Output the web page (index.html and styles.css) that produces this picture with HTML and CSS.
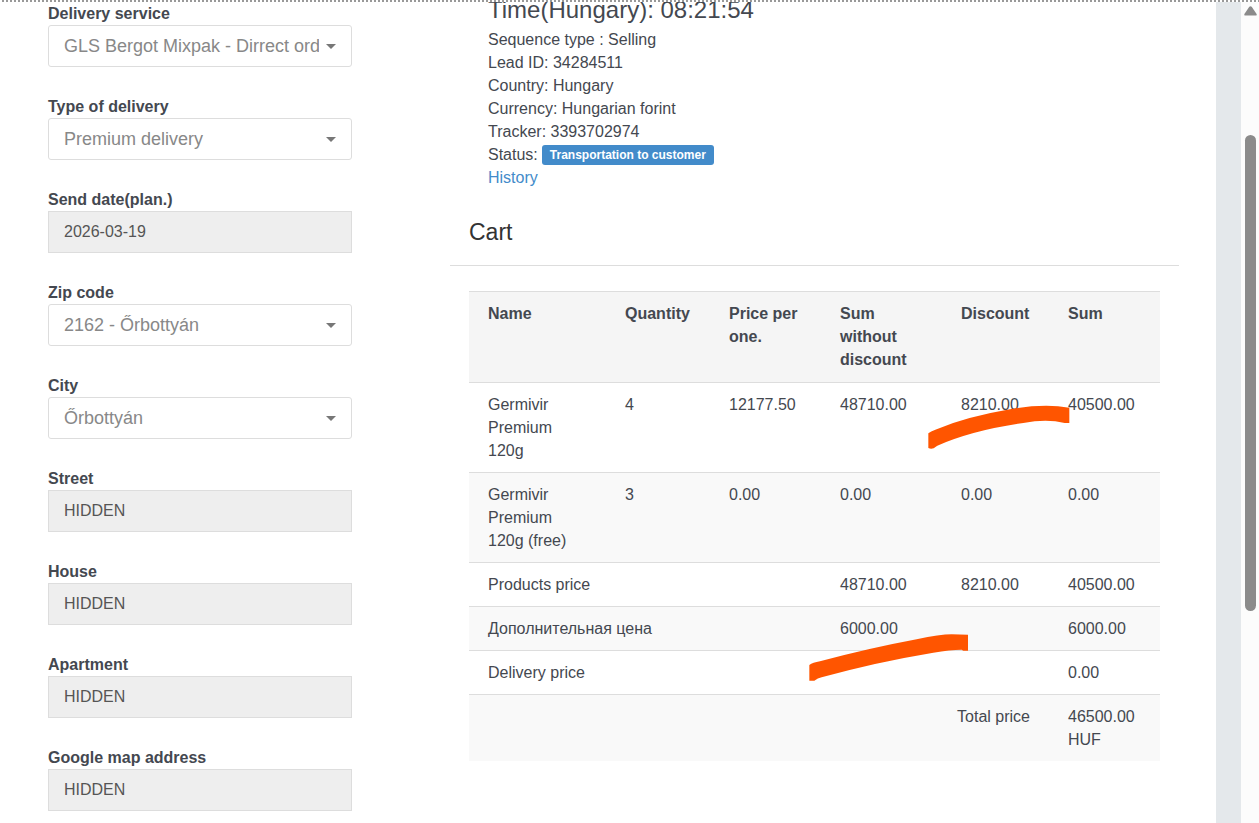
FILE: index.html
```html
<!DOCTYPE html>
<html lang="en">
<head>
    <meta charset="UTF-8">
    <meta name="viewport" content="width=device-width, initial-scale=1.0">
    <title>Order 34284511</title>
    <link rel="stylesheet" href="styles.css">
</head>
<body>
    <div class="page">
        <form class="delivery-form">
            <div class="form-group">
                <label for="service">Delivery service</label>
                <div class="select-wrap">
                    <select id="service"><option>GLS Bergot Mixpak - Dirrect order</option></select>
                    <svg class="caret" viewBox="0 0 10 5"><path d="M0 0h10L5 5z"/></svg>
                </div>
            </div>
            <div class="form-group">
                <label for="type">Type of delivery</label>
                <div class="select-wrap">
                    <select id="type"><option>Premium delivery</option></select>
                    <svg class="caret" viewBox="0 0 10 5"><path d="M0 0h10L5 5z"/></svg>
                </div>
            </div>
            <div class="form-group">
                <label for="send-date">Send date(plan.)</label>
                <input type="text" id="send-date" value="2026-03-19" readonly>
            </div>
            <div class="form-group">
                <label for="zip">Zip code</label>
                <div class="select-wrap">
                    <select id="zip"><option>2162 - Őrbottyán</option></select>
                    <svg class="caret" viewBox="0 0 10 5"><path d="M0 0h10L5 5z"/></svg>
                </div>
            </div>
            <div class="form-group">
                <label for="city">City</label>
                <div class="select-wrap">
                    <select id="city"><option>Őrbottyán</option></select>
                    <svg class="caret" viewBox="0 0 10 5"><path d="M0 0h10L5 5z"/></svg>
                </div>
            </div>
            <div class="form-group">
                <label for="street">Street</label>
                <input type="text" id="street" value="HIDDEN" readonly>
            </div>
            <div class="form-group">
                <label for="house">House</label>
                <input type="text" id="house" value="HIDDEN" readonly>
            </div>
            <div class="form-group">
                <label for="apartment">Apartment</label>
                <input type="text" id="apartment" value="HIDDEN" readonly>
            </div>
            <div class="form-group">
                <label for="map-address">Google map address</label>
                <input type="text" id="map-address" value="HIDDEN" readonly>
            </div>
        </form>

        <main class="order">
            <section class="order-info">
                <h2>Time(Hungary): 08:21:54</h2>
                <p>Sequence type : Selling</p>
                <p>Lead ID: 34284511</p>
                <p>Country: Hungary</p>
                <p>Currency: Hungarian forint</p>
                <p>Tracker: 3393702974</p>
                <p class="status">Status: <span class="badge">Transportation to customer</span></p>
                <p><a href="#history">History</a></p>
            </section>

            <h3 class="cart-title">Cart</h3>
            <div class="cart">
                <table class="cart-table">
                    <colgroup>
                        <col>
                        <col class="col-quantity">
                        <col class="col-price">
                        <col class="col-full">
                        <col class="col-discount">
                        <col class="col-sum">
                    </colgroup>
                    <thead>
                        <tr>
                            <th>Name</th>
                            <th>Quantity</th>
                            <th>Price per one.</th>
                            <th>Sum without discount</th>
                            <th>Discount</th>
                            <th>Sum</th>
                        </tr>
                    </thead>
                    <tbody>
                        <tr>
                            <td>Germivir Premium 120g</td>
                            <td>4</td>
                            <td>12177.50</td>
                            <td>48710.00</td>
                            <td class="marked">8210.00
                                <svg class="mark mark-discount" viewBox="84 72 426 138"><path d="M85 160Q92 154 106 149Q200 110 330 88Q430 70 508 83V129H494Q440 116 370 129Q220 150 112 197L101 205Q92 208 85 204z"/></svg>
                            </td>
                            <td>40500.00</td>
                        </tr>
                        <tr>
                            <td>Germivir Premium 120g (free)</td>
                            <td>3</td>
                            <td>0.00</td>
                            <td>0.00</td>
                            <td>0.00</td>
                            <td>0.00</td>
                        </tr>
                        <tr>
                            <td colspan="3">Products price</td>
                            <td>48710.00</td>
                            <td>8210.00</td>
                            <td>40500.00</td>
                        </tr>
                        <tr>
                            <td colspan="3">Дополнительная цена</td>
                            <td class="marked">6000.00
                                <svg class="mark mark-extra" viewBox="87 99 480 147"><path d="M88 195Q98 188 120 184Q270 144 410 118Q480 103 515 103L564 104V152H550L545 149Q510 149 460 158Q280 188 125 232Q113 235 103 242H88z"/></svg>
                            </td>
                            <td></td>
                            <td>6000.00</td>
                        </tr>
                        <tr>
                            <td colspan="5">Delivery price</td>
                            <td>0.00</td>
                        </tr>
                        <tr>
                            <td colspan="5" class="total">Total price</td>
                            <td>46500.00 HUF</td>
                        </tr>
                    </tbody>
                </table>
            </div>
        </main>
    </div>
    <div class="gutter"></div>
    <div class="scrollbar">
        <svg class="scroll-up" viewBox="0 0 13 10"><path d="M5.3 .8Q6.5-.4 7.7.8L12.6 8Q13 9.6 11.6 9.6H1.4Q0 9.6.4 8z"/></svg>
        <div class="scroll-thumb"></div>
    </div>
</body>
</html>
```
FILE: styles.css
```css
* {
    box-sizing: border-box;
}
body {
    display: flex;
    min-height: 100vh;
    margin: 0;
    font-family: "Liberation Sans", Arial, sans-serif;
    font-size: 16px;
    line-height: 23px;
    color: #444850;
    background: #fff;
}
/* dotted line over the top edge */
body::before {
    content: "";
    position: absolute;
    top: 0;
    left: 0;
    right: 0;
    height: 2px;
    background: repeating-linear-gradient(90deg, #fff 0 2px, #999 2px 4px);
}
h2, h3, p {
    margin: 0;
    font-weight: normal;
}
a {
    color: #428bca;
    text-decoration: none;
}
.page {
    flex: 1;
    display: grid;
    grid-template-columns: 304px 1fr;
    gap: 98px;
    padding: 2px 37px 10px 48px;
}
.delivery-form {
    display: flex;
    flex-direction: column;
    gap: 28px;
}
.form-group label {
    display: block;
    font-weight: bold;
}
.form-group input,
.form-group select {
    display: block;
    width: 100%;
    height: 42px;
    margin: 0;
    padding: 0 15px;
    border: 1px solid #ddd;
    font-family: inherit;
}
.form-group input {
    font-size: 16px;
    color: #555;
    background: #eee;
}
.form-group select {
    appearance: none;
    padding-right: 32px;
    border-radius: 3px;
    font-size: 18px;
    color: #888;
    background: #fff;
}
.select-wrap {
    position: relative;
}
.caret {
    position: absolute;
    right: 16px;
    top: 19px;
    width: 10px;
    height: 5px;
    fill: #777;
    pointer-events: none;
}
.order-info {
    padding-left: 38px;
}
.order-info h2 {
    margin-bottom: 10px;
    font-size: 24px;
    line-height: 16px;
}
.status {
    display: flex;
    align-items: center;
    gap: 4px;
}
.badge {
    padding: 0 8px;
    border-radius: 3px;
    font-size: 12px;
    font-weight: bold;
    line-height: 20px;
    color: #fff;
    background: #428bca;
}
.cart-title {
    padding: 31px 19px 21px;
    border-bottom: 1px solid #ddd;
    font-size: 23px;
    line-height: 24px;
    color: #333;
}
.cart {
    padding: 25px 19px 0;
}
.cart-table {
    width: 100%;
    table-layout: fixed;
    border-spacing: 0;
}
.col-quantity {
    width: 104px;
}
.col-price,
.col-sum {
    width: 111px;
}
.col-full {
    width: 121px;
}
.col-discount {
    width: 107px;
}
.cart-table th,
.cart-table td {
    padding: 10px 19px;
    border-top: 1px solid #ddd;
    text-align: left;
    vertical-align: top;
}
.cart-table th {
    padding-bottom: 11px;
    background: #f5f5f5;
}
.cart-table tbody tr:nth-child(even) {
    background: #f9f9f9;
}
.cart-table .total {
    text-align: right;
}
/* marker strokes */
.marked {
    position: relative;
}
.mark {
    position: absolute;
    z-index: 1;
    fill: #ff5500;
}
.mark-discount {
    left: -14px;
    top: 21px;
    width: 142px;
    height: 46px;
}
.mark-extra {
    left: -12px;
    top: 26px;
    width: 160px;
    height: 49px;
}
.gutter {
    width: 25px;
    margin-top: 2px;
    background: #e4e8eb;
}
.scrollbar {
    display: flex;
    flex-direction: column;
    align-items: center;
    width: 18px;
    padding-top: 6px;
    background: #fcfcfc;
}
.scroll-up {
    width: 13px;
    height: 10px;
    fill: #8b8b8b;
}
.scroll-thumb {
    width: 11px;
    height: 476px;
    margin-top: 119px;
    border-radius: 6px;
    background: #8b8b8b;
}
```
